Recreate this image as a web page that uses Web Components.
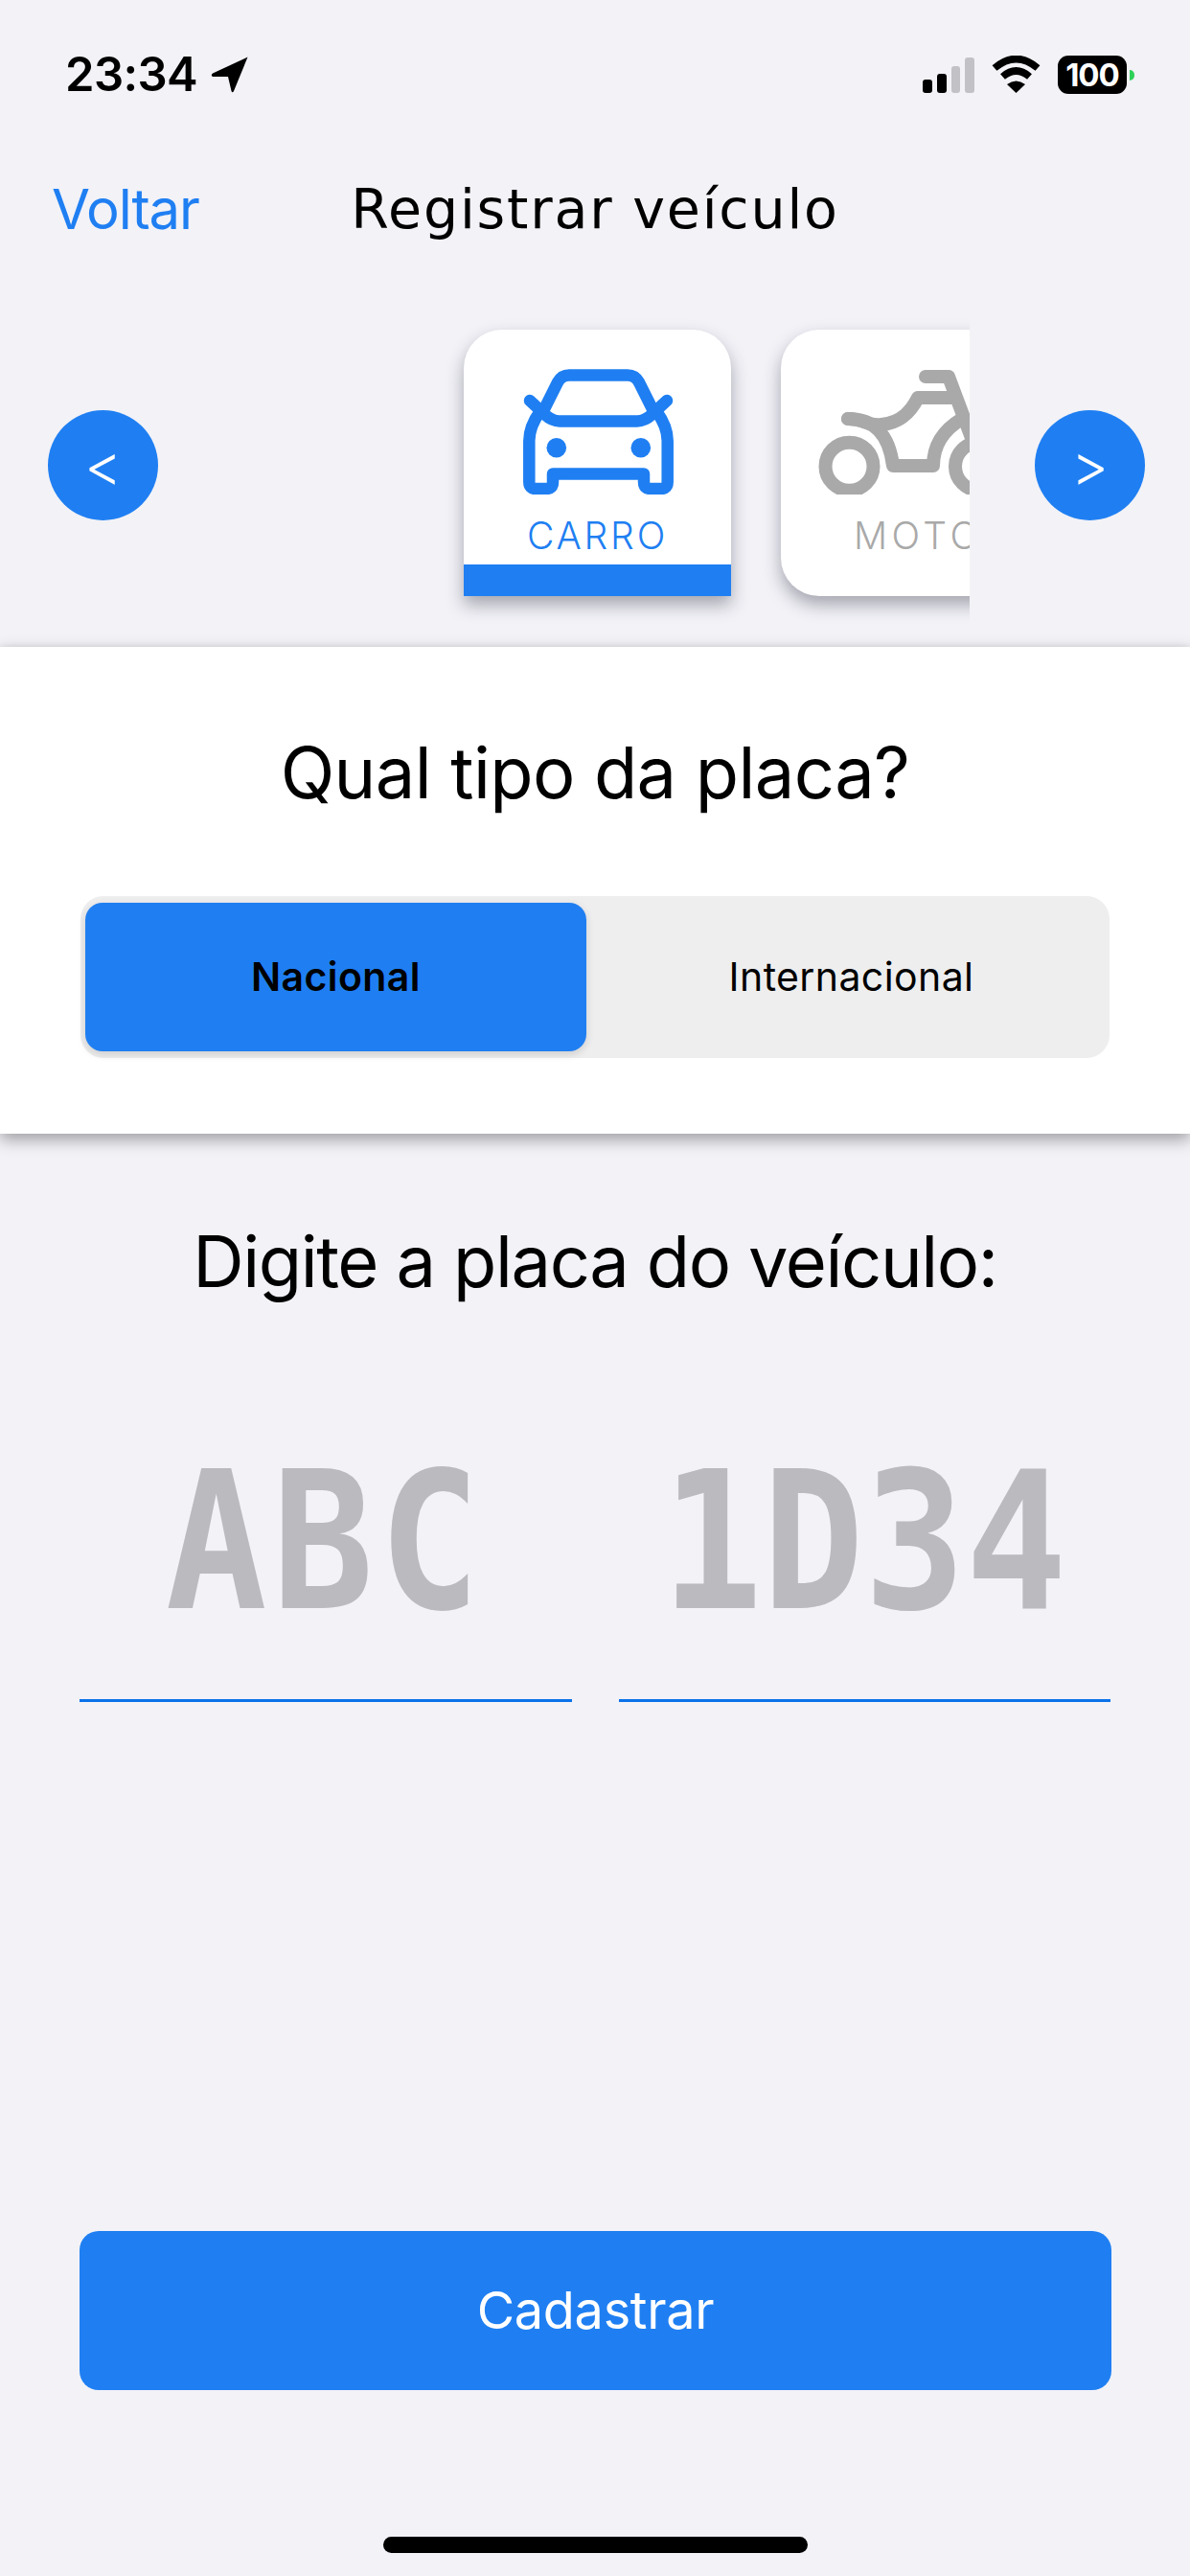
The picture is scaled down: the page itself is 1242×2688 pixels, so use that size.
<!DOCTYPE html>
<html lang="pt-BR">
<head>
<meta charset="utf-8">
<title>Registrar veículo</title>
<style>
  html, body { margin: 0; padding: 0; background: #f2f2f7; }
  body { width: 1242px; height: 2688px; overflow: hidden; font-family: Inter, "Liberation Sans", sans-serif; }
  app-screen { width: 1242px; height: 2688px; }
</style>
</head>
<body>
<app-screen>
  <status-bar time="23:34"></status-bar>
  <nav-bar back="Voltar">Registrar veículo</nav-bar>
  <vehicle-carousel>
    <vehicle-card label="CARRO" selected>
      <svg viewBox="0 0 157 131" width="157" height="131" fill="none" stroke="#1f7ff2" stroke-width="12.5" stroke-linecap="round" stroke-linejoin="round">
        <path d="M22 42 L36 14 Q40 6.5 48 6.5 H109 Q117 6.5 121 14 L135 42"/>
        <path d="M7 33 L22 47 Q30 54.5 38 54.5 H119 Q127 54.5 135 47 L150 33"/>
        <path d="M18 44 Q6.3 60 6.3 75 V118 Q6.3 125 13 125 H24 Q31 125 31 118 V109.5 H126 V118 Q126 125 133 125 H144 Q150.7 125 150.7 118 V75 Q150.7 60 139 44"/>
        <circle cx="34.8" cy="82.3" r="10.3" fill="#1f7ff2" stroke="none"/>
        <circle cx="122.8" cy="82.3" r="10.3" fill="#1f7ff2" stroke="none"/>
      </svg>
    </vehicle-card>
    <vehicle-card label="MOTO">
      <svg viewBox="0 0 200 131" width="200" height="131" fill="none" stroke="#a9a9a9" stroke-width="14" stroke-linecap="round" stroke-linejoin="round">
        <circle cx="32.5" cy="101.7" r="25"/>
        <circle cx="168" cy="101.7" r="25"/>
        <path d="M31 52 Q72 52 78 101 H120 Q120 70 150 52"/>
        <path d="M31 52 C48 52 52 60 66 58 C88 56 98 42 104 30 H142"/>
        <path d="M112 8 H136 L172 104"/>
      </svg>
    </vehicle-card>
  </vehicle-carousel>
  <plate-panel heading="Qual tipo da placa?">
    <segment-option selected>Nacional</segment-option>
    <segment-option>Internacional</segment-option>
  </plate-panel>
  <plate-form heading="Digite a placa do veículo:">
    <plate-input placeholder="ABC" style="--gap: 6px"></plate-input>
    <plate-input placeholder="1D34"></plate-input>
  </plate-form>
  <primary-button>Cadastrar</primary-button>
  <home-indicator></home-indicator>
</app-screen>

<script>
// small helper, every element just sets its shadow html once
class Base extends HTMLElement {
  render(html) {
    if (!this.shadowRoot) this.attachShadow({ mode: 'open' });
    this.shadowRoot.innerHTML = html;
  }
}

class AppScreen extends Base {
  connectedCallback() {
    this.render(`<style>:host { display: flex; flex-direction: column; }</style><slot></slot>`);
  }
}

class StatusBar extends Base {
  connectedCallback() {
    this.render(`
      <style>
        :host { display: flex; justify-content: space-between; align-items: flex-start; height: 168px; box-sizing: border-box; padding: 58px 58px 0 68px; color: #000; }
        .left { display: flex; align-items: center; gap: 14px; height: 40px; }
        .time { font: 600 49px/40px Inter, "Liberation Sans", sans-serif; letter-spacing: -.6px; }
        .right { display: flex; align-items: flex-start; }
        .wifi { margin: 0 18px 0 18px; }
        .battery { position: relative; width: 72px; height: 40px; border-radius: 11px; background: #000; color: #fff; font: 700 33px/40px Inter, "Liberation Sans", sans-serif; text-align: center; letter-spacing: -1px; }
        .nub { width: 5px; height: 11px; margin: 15px 0 0 3px; background: #30d158; border-radius: 0 5px 5px 0; }
      </style>
      <div class="left">
        <span class="time">${this.getAttribute('time')}</span>
        <svg width="39" height="38" viewBox="0 0 39 38"><path d="M38.5 .6 L24 36 Q22.5 38.5 21.5 36 L18 21 L2 21 Q-.5 19.5 2 17.5 Z" fill="#000"/></svg>
      </div>
      <div class="right">
        <svg width="54" height="39" viewBox="0 0 54 39" style="margin-top:2px">
          <rect x="0" y="23" width="10" height="14" rx="3" fill="#000"/>
          <rect x="15" y="17" width="10" height="20" rx="3" fill="#000"/>
          <rect x="30" y="9" width="9" height="28" rx="3" fill="#c1c1c6"/>
          <rect x="44" y="0" width="10" height="37" rx="3" fill="#c1c1c6"/>
        </svg>
        <svg class="wifi" width="51" height="39" viewBox="0 0 51 39" fill="none" stroke="#000" stroke-width="7.5">
          <path d="M3 13 Q25.5 -6 48 13"/>
          <path d="M11.5 22 Q25.5 10 39.5 22"/>
          <path d="M16 30 L25.5 39 L35 30 Q25.5 23 16 30 Z" fill="#000" stroke="none"/>
        </svg>
        <div class="battery">100</div>
        <div class="nub"></div>
      </div>
    `);
  }
}

class NavBar extends Base {
  connectedCallback() {
    this.render(`
      <style>
        :host { display: grid; grid-template-columns: 1fr auto 1fr; align-items: center; height: 100px; padding: 0 55px; }
        .back { font: 400 58px/1 Inter, "Liberation Sans", sans-serif; color: #1f7ff2; letter-spacing: -1.1px; margin-left: -1px; }
        .title { font: 400 57px/1 "DejaVu Sans", sans-serif; color: #000; letter-spacing: 1.8px; }
      </style>
      <span class="back">${this.getAttribute('back')}</span>
      <span class="title"><slot></slot></span>
      <span></span>
    `);
  }
}

class VehicleCarousel extends Base {
  connectedCallback() {
    this.render(`
      <style>
        :host { display: flex; align-items: flex-start; height: 407px; padding-top: 62px; box-sizing: border-box; }
        .arrow { flex: none; width: 115px; height: 115px; box-sizing: border-box; padding-bottom: 2px; margin-top: 98px; border-radius: 50%; background: #1f7ff2; color: #fff; display: flex; align-items: center; justify-content: center; font: 300 60px/1 Inter, "Liberation Sans", sans-serif; }
        .prev { margin-left: 50px; }
        .next { margin-left: 68px; }
        .track { width: 840px; margin-left: 7px; height: 323px; flex: none; overflow: hidden; display: flex; gap: 52px; padding: 14px 0 0 312px; box-sizing: border-box; }
      </style>
      <div class="arrow prev">&lt;</div>
      <div class="track"><slot></slot></div>
      <div class="arrow next">&gt;</div>
    `);
  }
}

class VehicleCard extends Base {
  connectedCallback() {
    const on = this.hasAttribute('selected');
    this.render(`
      <style>
        :host { display: flex; flex: none; flex-direction: column; width: 279px; height: 278px; box-sizing: border-box; background: #fff; border-radius: 40px; box-shadow: 0 9px 18px rgba(40,40,60,.38); }
        :host([selected]) { border-radius: 40px 40px 0 0; }
        .icon { height: 131px; margin-top: 41px; padding-left: ${on ? 62 : 39}px; overflow: hidden; }
        .icon ::slotted(svg) { display: block; }
        .label { margin-top: 21px; padding-left: ${on ? 0 : 76}px; text-align: ${on ? 'center' : 'left'}; font: 300 39px/44px Inter, "Liberation Sans", sans-serif; letter-spacing: ${on ? 2.8 : 4.5}px; color: ${on ? '#1f7ff2' : '#a9a9a9'}; white-space: nowrap; }
        .bar { margin-top: auto; height: 33px; background: ${on ? '#1f7ff2' : 'transparent'}; }
      </style>
      <div class="icon"><slot></slot></div>
      <div class="label">${this.getAttribute('label')}</div>
      <div class="bar"></div>
    `);
  }
}

class PlatePanel extends Base {
  connectedCallback() {
    this.render(`
      <style>
        :host { display: block; height: 508px; box-sizing: border-box; background: #fff; padding-top: 87px; box-shadow: 0 6px 16px rgba(0,0,0,.35), 0 -2px 5px rgba(0,0,0,.04); position: relative; }
        h2 { margin: 0; text-align: center; font: 400 74px/88px Inter, "Liberation Sans", sans-serif; color: #000; letter-spacing: -.6px; }
        .seg { display: grid; grid-template-columns: 523px 1fr; margin: 85px 84px 0; height: 169px; box-sizing: border-box; padding: 7px 5px; border-radius: 24px; background: #eeeeef; }
      </style>
      <h2>${this.getAttribute('heading')}</h2>
      <div class="seg"><slot></slot></div>
    `);
  }
}

class SegmentOption extends Base {
  connectedCallback() {
    this.render(`
      <style>
        :host { display: flex; align-items: center; justify-content: center; padding-left: 12px; border-radius: 18px; font: 400 41px/1 Inter, "Liberation Sans", sans-serif; letter-spacing: .4px; color: #000; }
        :host([selected]) { padding-left: 0; background: #1f7ff2; font-weight: 600; box-shadow: 0 3px 8px rgba(0,0,0,.14); }
      </style>
      <slot></slot>
    `);
  }
}

class PlateForm extends Base {
  connectedCallback() {
    this.render(`
      <style>
        :host { display: block; padding-top: 89px; }
        h2 { margin: 0; text-align: center; font: 400 74px/88px Inter, "Liberation Sans", sans-serif; color: #000; letter-spacing: -1.4px; }
        .row { display: grid; grid-template-columns: 1fr 1fr; gap: 49px; margin: 178px 83px 0; }
      </style>
      <h2>${this.getAttribute('heading')}</h2>
      <div class="row"><slot></slot></div>
    `);
  }
}

class PlateInput extends Base {
  connectedCallback() {
    this.render(`
      <style>
        :host { display: block; height: 238px; box-sizing: border-box; border-bottom: 3px solid #0a72ea; text-align: center; }
        .ph { display: inline-block; font: 700 200px/142px "DejaVu Sans Mono", monospace; letter-spacing: var(--gap, 0); color: #bbbbbf; transform: scaleX(.88); white-space: nowrap; }
      </style>
      <span class="ph">${this.getAttribute('placeholder')}</span>
    `);
  }
}

class PrimaryButton extends Base {
  connectedCallback() {
    this.render(`
      <style>
        :host { display: flex; align-items: center; justify-content: center; height: 166px; margin: 552px 82px 0 83px; border-radius: 20px; background: #1f7ff2; color: #fff; font: 400 54px/1 Inter, "Liberation Sans", sans-serif; letter-spacing: -.3px; }
      </style>
      <slot></slot>
    `);
  }
}

class HomeIndicator extends Base {
  connectedCallback() {
    this.render(`
      <style>
        :host { display: block; width: 443px; height: 17px; margin: 153px auto 0; border-radius: 9px; background: #000; }
      </style>
    `);
  }
}

customElements.define('app-screen', AppScreen);
customElements.define('status-bar', StatusBar);
customElements.define('nav-bar', NavBar);
customElements.define('vehicle-carousel', VehicleCarousel);
customElements.define('vehicle-card', VehicleCard);
customElements.define('plate-panel', PlatePanel);
customElements.define('segment-option', SegmentOption);
customElements.define('plate-form', PlateForm);
customElements.define('plate-input', PlateInput);
customElements.define('primary-button', PrimaryButton);
customElements.define('home-indicator', HomeIndicator);
</script>
</body>
</html>
